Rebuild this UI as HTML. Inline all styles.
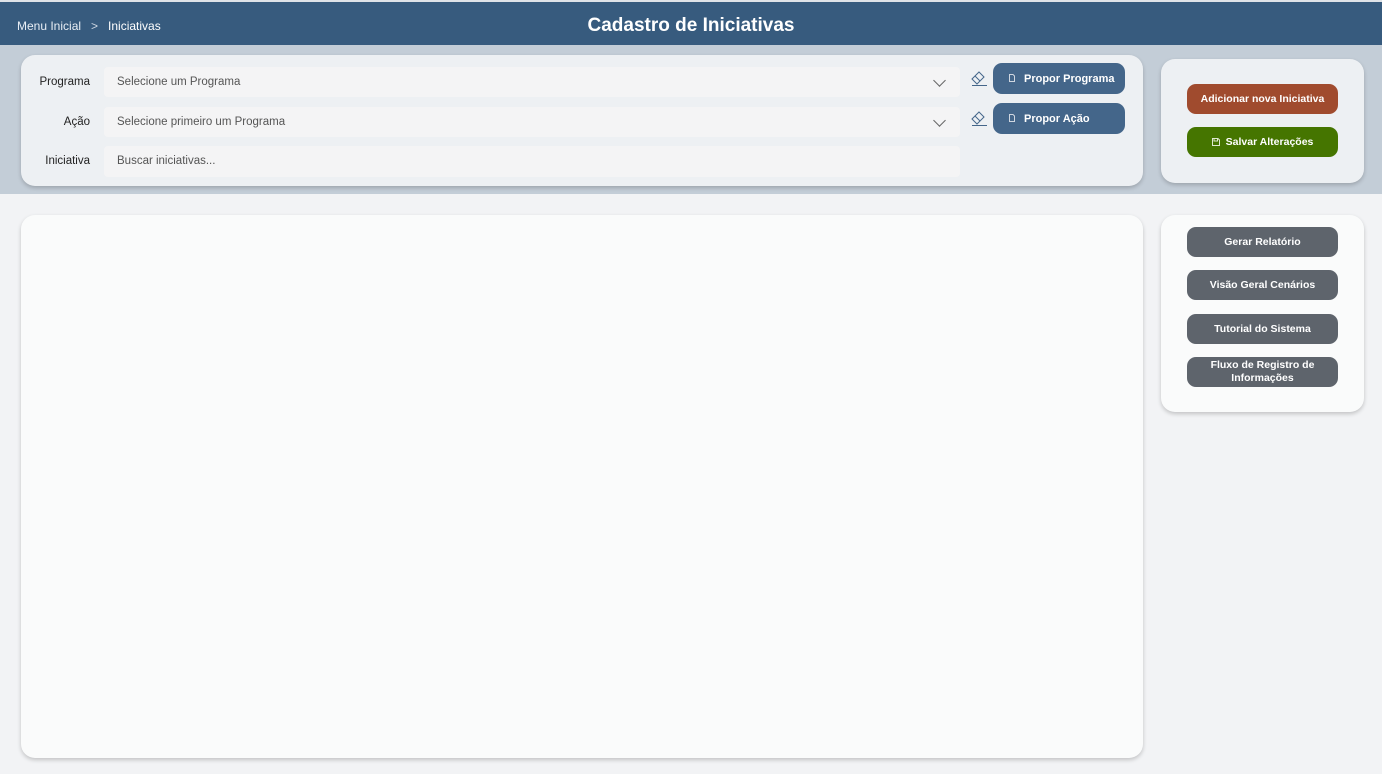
<!DOCTYPE html>
<html><head><meta charset="utf-8"><style>
*{box-sizing:border-box;margin:0;padding:0}
body{width:1382px;height:774px;background:#F2F3F5;font-family:"Liberation Sans",sans-serif;position:relative;overflow:hidden}
.top{position:absolute;left:0;top:0;width:1382px;height:2px;background:#dfe3e8}
.hdr{position:absolute;left:0;top:2px;width:1382px;height:43px;background:#375B7E;color:#fff}
.bc{position:absolute;left:17px;top:17px;font-size:12px;color:#e8eef5}
.bc b{font-weight:normal;color:#fff;margin-left:10px}
.bc i{font-style:normal;margin-left:10px;color:#cfd8e3}
.title{position:absolute;left:0;right:0;top:13px;text-align:center;font-size:19px;font-weight:bold}
.band{position:absolute;left:0;top:45px;width:1382px;height:149px;background:#C3CDD7}
.card{position:absolute;background:#EDF0F3;border-radius:14px;box-shadow:0 2px 4px rgba(0,0,0,.2)}
.lbl{position:absolute;width:70px;text-align:right;font-size:11.5px;color:#222;left:20px}
.inp{position:absolute;left:104px;width:856px;height:30px;background:#F4F4F5;border-radius:4px;font-size:11.5px;color:#555;padding:9px 0 0 13px}
.chev{position:absolute;right:16px;top:9px;width:9px;height:9px;border-right:1px solid #666;border-bottom:1px solid #666;transform:rotate(45deg)}
.bb{position:absolute;left:993px;width:132px;height:31px;background:#44668A;border-radius:9px;color:#fff;font-size:11px;font-weight:bold;padding:10px 0 0 31px}
.bb svg{position:absolute;left:16px;top:11px}
.er{position:absolute;left:970px}
.btn{position:absolute;left:1187px;width:151px;height:30px;border-radius:9px;color:#fff;font-size:10.5px;font-weight:bold;text-align:center;line-height:30px}
.g{background:#5E646C}
</style></head><body>
<div class="top"></div>
<div class="hdr"><div class="bc">Menu Inicial<i>&gt;</i><b>Iniciativas</b></div><div class="title">Cadastro de Iniciativas</div></div>
<div class="band"></div>
<div class="card" style="left:21px;top:55px;width:1122px;height:131px"></div>
<div class="lbl" style="top:76px">Programa</div>
<div class="lbl" style="top:116px">Ação</div>
<div class="lbl" style="top:155px">Iniciativa</div>
<div class="inp" style="top:67px">Selecione um Programa<div class="chev"></div></div>
<div class="inp" style="top:107px">Selecione primeiro um Programa<div class="chev"></div></div>
<div class="inp" style="top:146px;height:31px">Buscar iniciativas...</div>
<svg class="er" style="top:69px" width="18" height="18" viewBox="0 0 18 18" fill="none" stroke="#44668A" stroke-width="1"><path d="M2 10 L9 3 L14 8 L7 15 Z M5 7 L10 12 M2 16.5 H17"/></svg>
<svg class="er" style="top:109px" width="18" height="18" viewBox="0 0 18 18" fill="none" stroke="#44668A" stroke-width="1"><path d="M2 10 L9 3 L14 8 L7 15 Z M5 7 L10 12 M2 16.5 H17"/></svg>
<div class="bb" style="top:63px"><svg width="6" height="8" viewBox="0 0 6 8"><path d="M.5.5H4L5.5 2V7.5H.5Z" fill="none" stroke="#cfd6e0"/></svg>Propor Programa</div>
<div class="bb" style="top:103px"><svg width="6" height="8" viewBox="0 0 6 8"><path d="M.5.5H4L5.5 2V7.5H.5Z" fill="none" stroke="#cfd6e0"/></svg>Propor Ação</div>
<div class="card" style="left:1161px;top:59px;width:203px;height:124px"></div>
<div class="btn" style="top:84px;background:#A04B2E">Adicionar nova Iniciativa</div>
<div class="btn" style="top:127px;background:#457500"><svg width="8" height="8" viewBox="0 0 8 8" style="vertical-align:-1px;margin-right:6px"><path d="M.5.5H6L7.5 2V7.5H.5Z M2 .5V3H5.5V.5" fill="none" stroke="#dfe8d0"/></svg>Salvar Alterações</div>
<div class="card" style="left:21px;top:215px;width:1122px;height:543px;background:#FAFBFB"></div>
<div class="card" style="left:1161px;top:215px;width:203px;height:197px;background:#FAFBFB"></div>
<div class="btn g" style="top:227px">Gerar Relatório</div>
<div class="btn g" style="top:270px">Visão Geral Cenários</div>
<div class="btn g" style="top:314px">Tutorial do Sistema</div>
<div class="btn g" style="top:357px;line-height:13px;padding-top:2px">Fluxo de Registro de<br>Informações</div>
</body></html>
